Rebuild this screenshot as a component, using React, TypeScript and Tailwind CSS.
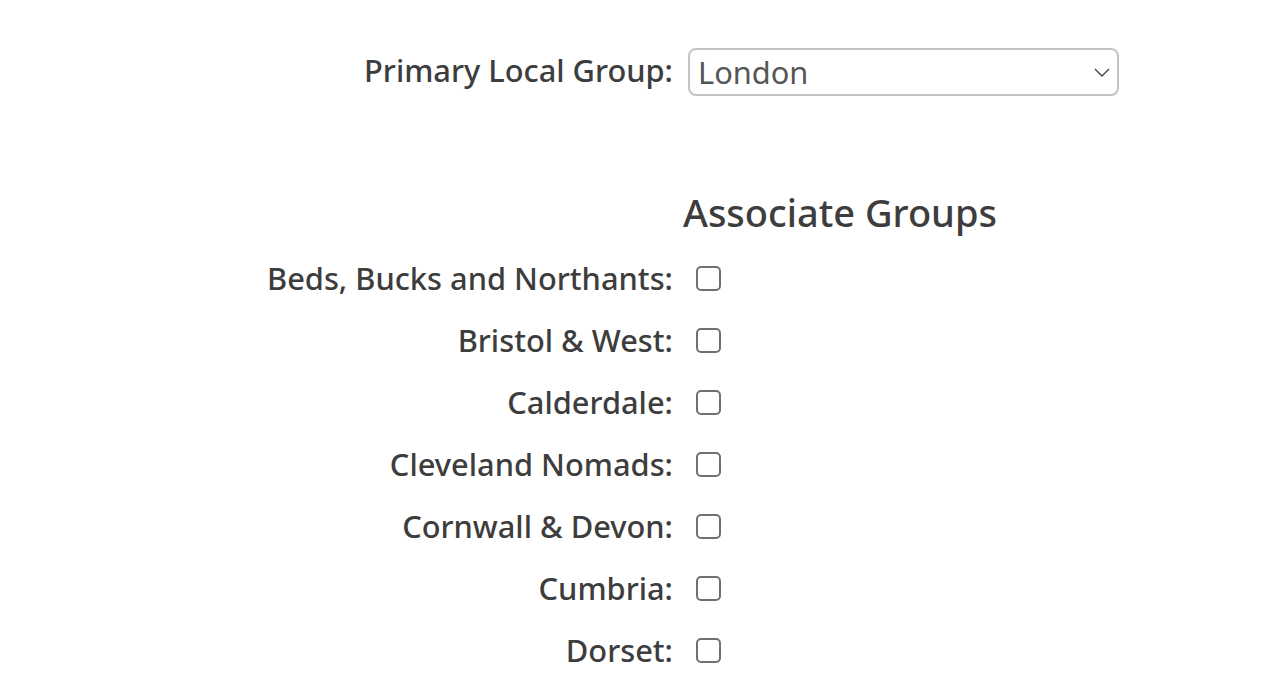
import React from 'react';

const groups = [
  "Beds, Bucks and Northants",
  "Bristol & West",
  "Calderdale",
  "Cleveland Nomads",
  "Cornwall & Devon",
  "Cumbria",
  "Dorset",
];

const App: React.FC = () => {
  return (
    <div className="min-h-screen bg-white text-[#3d3d3d]" style={{ fontFamily: '"Noto Sans", "Open Sans", sans-serif' }}>
      <div className="grid grid-cols-[673px_431px] gap-x-[15px] pt-[48px]">
        <label className="flex h-[48px] items-center justify-end pb-[4px] text-[30.8px] font-medium">Primary Local Group:</label>
        <div className="flex h-[48px] items-center justify-between rounded-[8px] border-2 border-[#c4c4c4] pl-[8px] pr-[4px]">
          <span className="text-[30.8px] text-[#555]">London</span>
          <svg width="22" height="22" viewBox="0 0 22 22" fill="none" stroke="#444" strokeWidth="1.4">
            <path d="M4 8l7 7 7-7" />
          </svg>
        </div>

        <div className="h-[151px]" />
        <div className="flex h-[151px] items-end pb-[6px]">
          <h2 className="-ml-[5px] text-[38px] font-medium">Associate Groups</h2>
        </div>

        {groups.map((g) => (
          <React.Fragment key={g}>
            <label className="flex h-[62px] items-center justify-end text-[30.8px] font-medium">{g}:</label>
            <div className="flex h-[62px] items-center pl-[8px]">
              <span className="block h-[25px] w-[25px] rounded-[5px] border-2 border-[#707070] bg-white" />
            </div>
          </React.Fragment>
        ))}
      </div>
    </div>
  );
};

export default App;
